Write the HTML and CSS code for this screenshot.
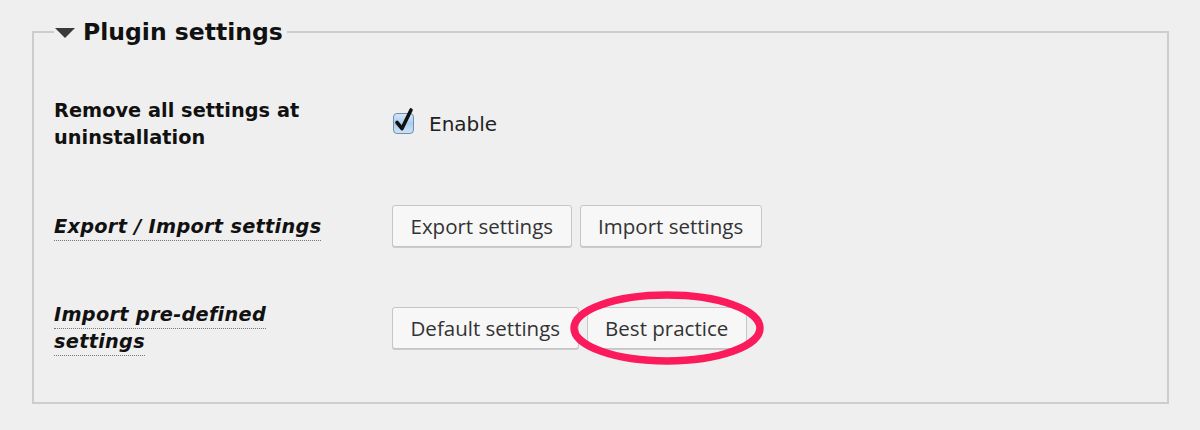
FILE: index.html
```html
<!DOCTYPE html>
<html>
<head>
<meta charset="utf-8">
<link rel="stylesheet" href="styles.css">
</head>
<body>
<fieldset class="panel">
  <legend class="panel-title"><span class="caret"></span>Plugin settings</legend>
  <div class="rows">
    <div class="row">
      <div class="label">Remove all settings at uninstallation</div>
      <div class="control">
        <label class="check">
          <svg class="checkbox" width="26" height="28" viewBox="0 0 26 28">
            <defs>
              <linearGradient id="cb" x1="0" y1="0" x2="0" y2="1">
                <stop offset="0" stop-color="#d6e8f8"/>
                <stop offset="0.5" stop-color="#a9cdef"/>
                <stop offset="1" stop-color="#cfe4f7"/>
              </linearGradient>
            </defs>
            <rect x="1.5" y="6.5" width="20" height="20" rx="3.5" fill="url(#cb)" stroke="#6f8fb0" stroke-width="1"/>
            <path d="M5 15.5 L10 21.5 L19 3" fill="none" stroke="#111" stroke-width="3.6" stroke-linecap="round" stroke-linejoin="round"/>
          </svg>
          <span>Enable</span>
        </label>
      </div>
    </div>
    <div class="row">
      <div class="label"><span class="help">Export / Import settings</span></div>
      <div class="control buttons">
        <button class="btn">Export settings</button>
        <button class="btn">Import settings</button>
      </div>
    </div>
    <div class="row">
      <div class="label"><span class="help">Import pre-defined settings</span></div>
      <div class="control buttons">
        <button class="btn">Default settings</button>
        <span class="highlight">
          <button class="btn">Best practice</button>
          <svg class="ring" width="200" height="80" viewBox="0 0 200 80">
            <ellipse cx="100" cy="40" rx="93" ry="33" fill="none" stroke="#fb1a5c" stroke-width="7.5"/>
          </svg>
        </span>
      </div>
    </div>
  </div>
</fieldset>
</body>
</html>
```

FILE: styles.css
```css
html, body {
  margin: 0;
  padding: 0;
  background: #efefef;
}
body {
  padding: 20px 31px 0 32px;
  font-family: "DejaVu Sans", Verdana, sans-serif;
  color: #111;
}
.panel {
  margin: 0;
  border: 2px solid #cdcdcd;
  padding: 0 0 0 20px;
  height: 384px;
  box-sizing: border-box;
}
.panel-title {
  padding: 0 4px 0 1px;
  margin-left: 0;
  font-weight: bold;
  font-size: 23.5px;
  line-height: 24px;
  display: flex;
  align-items: center;
  gap: 8px;
}
.caret {
  width: 0;
  height: 0;
  border-left: 10px solid transparent;
  border-right: 10px solid transparent;
  border-top: 10px solid #3a3a3a;
  margin-top: 2px;
}
.rows {
  display: flex;
  flex-direction: column;
  padding-top: 29px;
}
.row {
  display: grid;
  grid-template-columns: 338px auto;
  align-items: center;
  height: 102px;
}
.label {
  font-weight: bold;
  font-size: 19.3px;
  line-height: 27px;
  width: 280px;
  letter-spacing: 0.05px;
}
.help {
  font-style: italic;
  border-bottom: 1px dotted #777;
  padding-bottom: 2px;
  letter-spacing: 0.3px;
}
.control {
  display: flex;
  align-items: center;
}
.check {
  display: flex;
  align-items: center;
  gap: 11px;
  font-family: "DejaVu Sans", sans-serif;
  font-size: 20px;
  color: #222;
}
.checkbox {
  margin-top: -6px;
}
.buttons {
  gap: 8px;
}
.btn {
  font-family: "Open Sans", sans-serif;
  font-size: 20.5px;
  color: #333;
  background: #f7f7f7;
  border: 1px solid #c6c6c6;
  border-radius: 3px;
  box-shadow: 0 1px 0 #cbcbcb;
  height: 42px;
  padding: 0 17.5px;
  margin: 0;
}
.highlight {
  position: relative;
  display: inline-flex;
}
.ring {
  position: absolute;
  left: -20px;
  top: -19px;
  pointer-events: none;
}
```
